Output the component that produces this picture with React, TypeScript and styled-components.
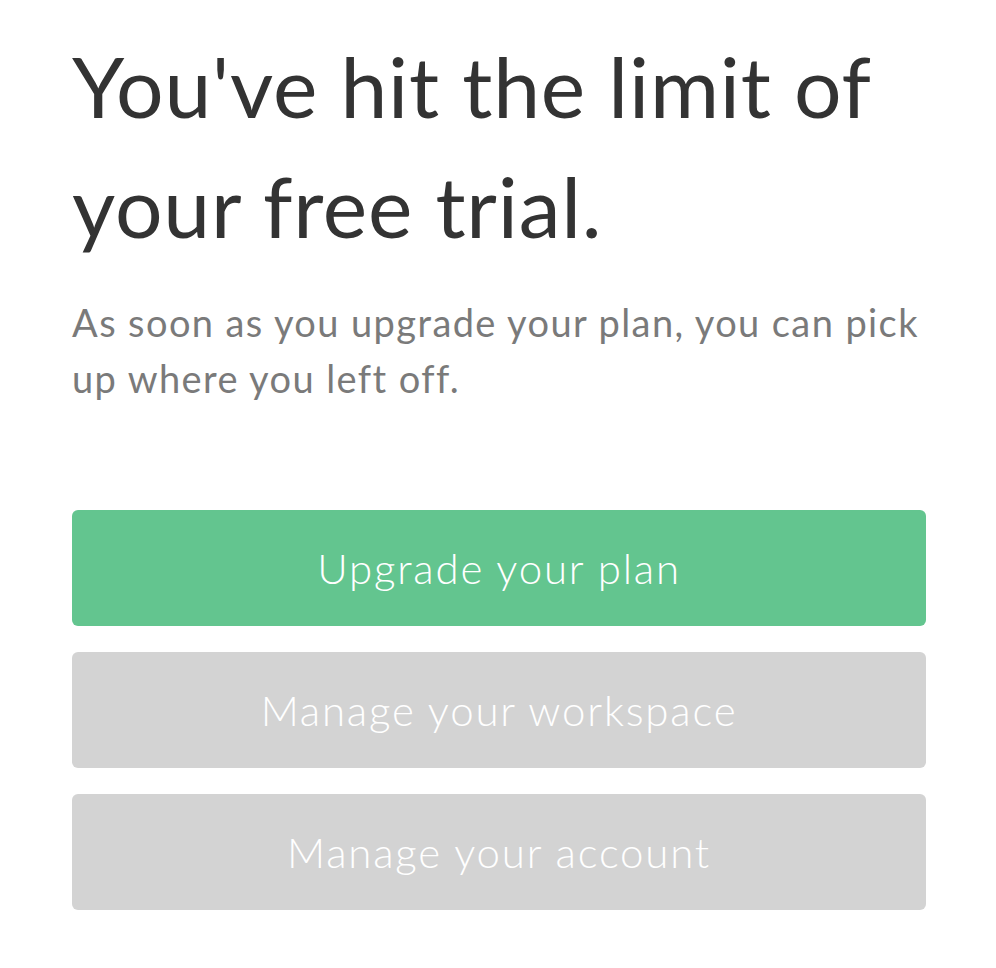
import React from 'react'
import styled, { createGlobalStyle } from 'styled-components'

const GlobalStyle = createGlobalStyle`
  body {
    margin: 0;
    background: #fff;
    font-family: Lato, "Noto Sans", sans-serif;
  }
`

const actions = [
  { label: 'Upgrade your plan', primary: true },
  { label: 'Manage your workspace', primary: false },
  { label: 'Manage your account', primary: false },
]

export default function App() {
  return (
    <>
      <GlobalStyle />
      <Page>
        <Title>You've hit the limit of your free trial.</Title>
        <Lead>As soon as you upgrade your plan, you can pick up where you left off.</Lead>
        <ActionList>
          {actions.map(a => (
            <ActionButton key={a.label} $primary={a.primary}>{a.label}</ActionButton>
          ))}
        </ActionList>
      </Page>
    </>
  )
}

const Page = styled.main`
  width: 854px;
  padding: 26px 70px 0 72px;
`

const Title = styled.h1`
  margin: 0;
  font-size: 84px;
  line-height: 120px;
  font-weight: 400;
  color: #333;
  letter-spacing: 0.8px;
`

const Lead = styled.p`
  margin: 28px 0 0;
  font-size: 38px;
  line-height: 56px;
  color: #7a7a7a;
  font-weight: 400;
  letter-spacing: 1.4px;
`

const ActionList = styled.div`
  display: flex;
  flex-direction: column;
  gap: 26px;
  margin-top: 104px;
`

const ActionButton = styled.button<{ $primary: boolean }>`
  height: 116px;
  border: none;
  border-radius: 6px;
  background: ${p => (p.$primary ? '#63c58f' : '#d3d3d3')};
  color: #fff;
  font-family: inherit;
  font-size: 42px;
  font-weight: 300;
  letter-spacing: 1.8px;
  cursor: pointer;
`
